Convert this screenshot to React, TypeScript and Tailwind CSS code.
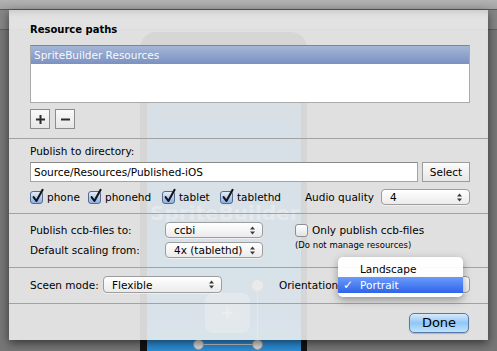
import React from "react";

// small aqua-style controls
function Arrows() {
  return (
    <svg width="5" height="9" viewBox="0 0 5 9" className="shrink-0">
      <path d="M0 3.6 L2.5 0.4 L5 3.6 Z" fill="#3a3a3a" />
      <path d="M0 5.4 L2.5 8.6 L5 5.4 Z" fill="#3a3a3a" />
    </svg>
  );
}

function Popup({ label, className }: { label?: string; className: string }) {
  return (
    <div
      className={`flex items-center justify-between rounded-[4px] border border-[#9d9d9d] bg-linear-to-b from-white to-[#ebebeb] pl-[8px] pr-[7px] shadow-[0_1px_0_rgba(255,255,255,0.5)] ${className}`}
    >
      <span>{label}</span>
      <Arrows />
    </div>
  );
}

function Check({ on }: { on?: boolean }) {
  return (
    <span className="relative inline-block w-[13px] h-[13px] shrink-0">
      {on ? (
        <span className="absolute inset-0 rounded-[3px] border border-[#55698c] bg-linear-to-b from-[#e4edfa] to-[#8db0e5]" />
      ) : (
        <span className="absolute inset-0 rounded-[3px] border border-[#8e8e8e] bg-linear-to-b from-white to-[#e4e4e4]" />
      )}
      {on && (
        <svg className="absolute left-[1px] top-[-3px]" width="14" height="16" viewBox="0 0 14 16">
          <path
            d="M2.6 9.2 L5.4 13 L11.6 1.8"
            stroke="#151515"
            strokeWidth="2.1"
            fill="none"
            strokeLinecap="round"
            strokeLinejoin="round"
          />
        </svg>
      )}
    </span>
  );
}

function SquareBtn({ minus }: { minus?: boolean }) {
  return (
    <div className="w-[20px] h-[20px] flex items-center justify-center border border-[#8c8c8c] bg-linear-to-b from-[#fafafa] to-[#e6e6e6]">
      <svg width="9" height="9" viewBox="0 0 9 9">
        <rect x="0" y="3.5" width="9" height="2" fill="#2c2c2c" />
        {!minus && <rect x="3.5" y="0" width="2" height="9" fill="#2c2c2c" />}
      </svg>
    </div>
  );
}

function Sep() {
  return <div className="h-px shrink-0 bg-[#a2a2a2]" />;
}

export default function App() {
  return (
    <div className="relative w-[497px] h-[351px] overflow-hidden bg-[#767676] text-black text-[10.5px] leading-[14px] font-['DejaVu_Sans',sans-serif]">
      {/* window chrome behind the sheet */}
      <div className="h-[10px] bg-linear-to-b from-[#b3b3b3] to-[#a3a3a3] border-b border-[#595959]" />
      <div className="h-[20px] bg-[#858585] border-b border-[#5e5e5e]" />

      {/* phone preview on the canvas */}
      <div className="absolute left-[140px] top-[32px] w-[167px] h-[340px] rounded-[16px] bg-[#121212]">
        <div className="absolute left-[7px] right-[6px] top-[20px] bottom-0 bg-linear-to-b from-[#1b6aa8] to-[#2d8fd8] overflow-hidden">
          <div className="absolute left-[3px] top-[153px] text-[20px] leading-[16px] font-bold text-white/60">
            SpriteBuilder
          </div>
          <div className="absolute left-[110px] top-[228px] w-px h-[70px] bg-white/50" />
          <div className="absolute left-[105px] top-[228px] w-[11px] h-[11px] rounded-full bg-[#cfd6dc]" />
          <div className="absolute left-[58px] top-[241px] w-[45px] h-[40px] rounded-[8px] bg-white/45 flex items-center justify-center text-white text-[16px] font-bold">
            +
          </div>
          <div className="absolute left-[51px] top-[292px] w-[60px] h-px bg-[#c6c6c6]" />
          <div className="absolute left-[46px] top-[287px] w-[11px] h-[11px] rounded-full border border-[#9a9a9a] bg-[#d8d8d8]" />
          <div className="absolute left-[105px] top-[287px] w-[11px] h-[11px] rounded-full border border-[#9a9a9a] bg-[#d8d8d8]" />
        </div>
      </div>

      {/* the sheet */}
      <div className="absolute left-[9px] top-[10px] w-[479px] h-[330px] flex flex-col bg-[#ececec]/90 shadow-[0_3px_9px_rgba(0,0,0,0.55),inset_0_6px_6px_-4px_rgba(0,0,0,0.12)]">
        {/* resource paths */}
        <div className="pl-[21px] pr-[18px] pt-[12px] pb-[9px]">
          <div className="h-[15px] flex items-center font-bold text-[10px]">Resource paths</div>
          <div className="mt-[8px] h-[58px] bg-white border border-[#ababab] border-t-[#848484]">
            <div className="h-[18px] flex items-center pl-[3px] text-[#f7f9fc] bg-linear-to-b from-[#a5b7d7] to-[#7b91c2]">
              SpriteBuilder Resources
            </div>
          </div>
          <div className="mt-[6px] flex gap-[5px]">
            <SquareBtn />
            <SquareBtn minus />
          </div>
        </div>
        <Sep />

        {/* publish directory */}
        <div className="pl-[21px] pr-[18px] pt-[5px] pb-[8px]">
          <div className="h-[14px] flex items-center">Publish to directory:</div>
          <div className="mt-[4px] flex gap-[4px]">
            <div className="flex-1 h-[20px] flex items-center pl-[3px] bg-white border border-[#a3a3a3] border-t-[#8a8a8a]">
              Source/Resources/Published-iOS
            </div>
            <div className="w-[48px] h-[20px] flex items-center justify-center border border-[#9c9c9c] bg-linear-to-b from-[#fbfbfb] to-[#e7e7e7]">
              Select
            </div>
          </div>
          <div className="mt-[7px] h-[16px] flex items-center">
            <div className="w-[58px] flex items-center gap-[4px]">
              <Check on />
              <span>phone</span>
            </div>
            <div className="w-[74px] flex items-center gap-[4px]">
              <Check on />
              <span>phonehd</span>
            </div>
            <div className="w-[58px] flex items-center gap-[4px]">
              <Check on />
              <span>tablet</span>
            </div>
            <div className="flex items-center gap-[4px]">
              <Check on />
              <span>tablethd</span>
            </div>
            <div className="ml-auto flex items-center gap-[7px]">
              <span>Audio quality</span>
              <Popup label="4" className="w-[89px] h-[16px]" />
            </div>
          </div>
        </div>
        <Sep />

        {/* ccb files */}
        <div className="pl-[21px] pr-[18px] pt-[8px] pb-[9px] flex">
          <div className="flex flex-col gap-[4px]">
            <div className="h-[16px] flex items-center">
              <span className="w-[135px]">Publish ccb-files to:</span>
              <Popup label="ccbi" className="w-[98px] h-[16px]" />
            </div>
            <div className="h-[16px] flex items-center">
              <span className="w-[135px]">Default scaling from:</span>
              <Popup label="4x (tablethd)" className="w-[98px] h-[16px]" />
            </div>
          </div>
          <div className="ml-[32px] flex flex-col">
            <div className="h-[16px] flex items-center gap-[4px]">
              <Check />
              <span>Only publish ccb-files</span>
            </div>
            <div className="mt-[2px] text-[8.5px] leading-[10px]">(Do not manage resources)</div>
          </div>
        </div>
        <Sep />

        {/* screen mode */}
        <div className="pl-[21px] pr-[18px] pt-[8px] pb-[10px]">
          <div className="h-[17px] flex items-center">
            <span className="w-[73px]">Sceen mode:</span>
            <Popup label="Flexible" className="w-[119px] h-[17px]" />
            <span className="ml-[57px]">Orientation:</span>
            <Popup label="Portrait" className="ml-[8px] flex-1 h-[17px]" />
          </div>
        </div>
        <Sep />

        {/* footer */}
        <div className="pl-[21px] pr-[19px] pt-[9px] flex justify-end">
          <div className="w-[60px] h-[20px] flex items-center justify-center rounded-[5px] border border-[#5878a9] bg-linear-to-b from-[#d6eafc] via-[#90c7f5] to-[#bfe3fd] text-[13px] shadow-[0_1px_1px_rgba(0,0,0,0.2)]">
            Done
          </div>
        </div>

        {/* open orientation menu */}
        <div className="absolute left-[329px] top-[247px] w-[125px] h-[40px] py-[4px] rounded-[5px] bg-white/95 shadow-[0_3px_9px_rgba(0,0,0,0.35)]">
          <div className="h-[16px] flex items-center pl-[22px]">Landscape</div>
          <div className="relative h-[16px] flex items-center pl-[22px] text-white bg-linear-to-b from-[#6b9bf9] to-[#2f63ea]">
            <span className="absolute left-[5px] text-[12px] font-bold">✓</span>
            Portrait
          </div>
        </div>
      </div>
    </div>
  );
}
